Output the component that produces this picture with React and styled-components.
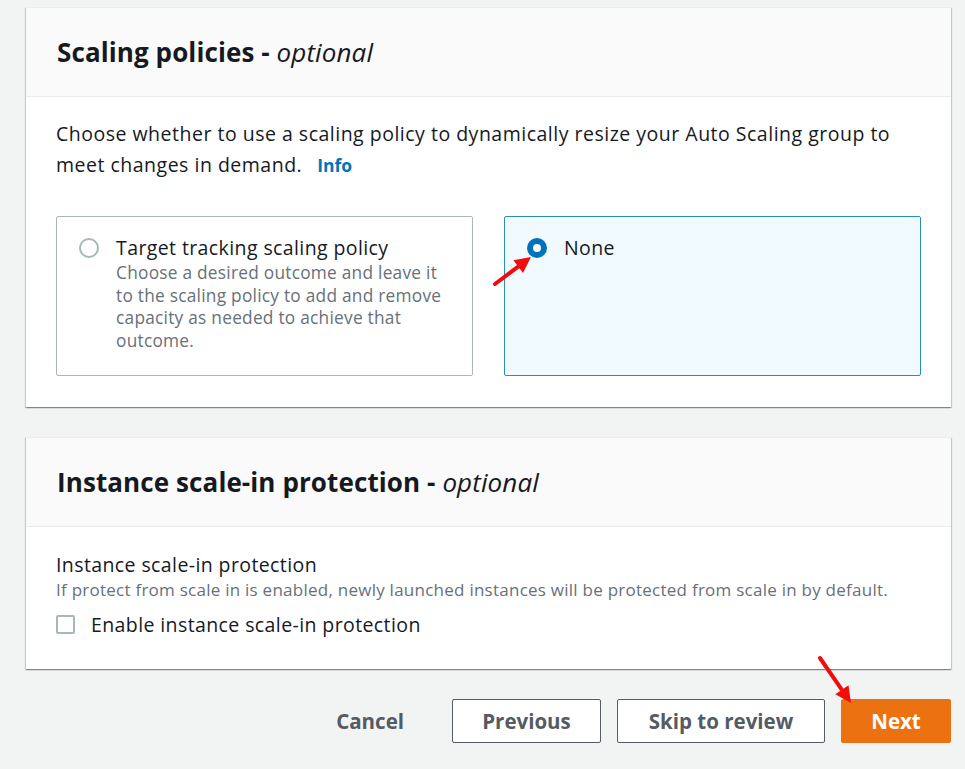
import React from 'react';
import styled, { createGlobalStyle } from 'styled-components';

const GlobalStyle = createGlobalStyle`
    html, body {
        margin: 0;
        padding: 0;
        background: #f2f3f3;
        font-family: "Open Sans", "Noto Sans", Arial, sans-serif;
        color: #16191f;
    }
`

const Page = styled.div`
    position: relative;
    width: 965px;
    height: 769px;
    padding: 7px 14px 0 26px;
    box-sizing: border-box;
    display: flex;
    flex-direction: column;
    gap: 30px;
`

const Card = styled.section`
    background: #fff;
    box-shadow: 0 1px 1px 0 rgba(0, 28, 36, 0.3), 1px 1px 1px 0 rgba(0, 28, 36, 0.15), -1px 1px 1px 0 rgba(0, 28, 36, 0.15);
    border-top: 1px solid #eaeded;
`

const CardHeader = styled.header`
    height: 88px;
    padding: 0 31px;
    display: flex;
    align-items: center;
    background: #fafafa;
    border-bottom: 1px solid #eaeded;
`

const Title = styled.h2`
    margin: 0;
    font-size: 26px;
    font-weight: 700;
    letter-spacing: 0.1px;

    & em {
        font-weight: 400;
    }
`

const CardBody = styled.div`
    padding: ${p => p.$pad};
`

const Lead = styled.p`
    margin: 0;
    font-size: 19.5px;
    line-height: 31px;
    letter-spacing: 0.5px;
`

const InfoLink = styled.a`
    display: inline-block;
    margin-left: 15px;
    font-size: 17.5px;
    line-height: 22px;
    font-weight: 700;
    letter-spacing: 0;
    color: #0073bb;
    text-decoration: none;
`

const Tiles = styled.div`
    margin-top: 36px;
    display: grid;
    grid-template-columns: 1fr 1fr;
    gap: 31px;
`

const Tile = styled.label`
    height: 160px;
    box-sizing: border-box;
    padding: 19px 28px 19px 22px;
    display: flex;
    align-items: flex-start;
    gap: 17px;
    border: 1px solid ${p => (p.$selected ? '#2a8fb7' : '#aab7b8')};
    border-radius: 2px;
    background: ${p => (p.$selected ? '#f1faff' : '#fff')};
`

const Radio = styled.span`
    flex: none;
    margin-top: 2px;
    width: 20px;
    height: 20px;
    box-sizing: border-box;
    border-radius: 50%;
    border: ${p => (p.$checked ? '6px solid #0073bb' : '2px solid #aab7b8')};
    background: #fff;
`

const TileText = styled.div`
    display: flex;
    flex-direction: column;
`

const TileTitle = styled.span`
    font-size: 19.5px;
    line-height: 24px;
    letter-spacing: 0.4px;
`

const TileDesc = styled.span`
    margin-top: 2px;
    font-size: 17.3px;
    line-height: 22.7px;
    color: #687078;
    letter-spacing: 0.25px;
`

const FieldLabel = styled.div`
    font-size: 19.5px;
    line-height: 25px;
    letter-spacing: 0.4px;
`

const FieldDesc = styled.div`
    margin-top: 1px;
    font-size: 17px;
    line-height: 24px;
    color: #687078;
    letter-spacing: 0.25px;
`

const CheckRow = styled.label`
    margin-top: 10px;
    display: flex;
    align-items: center;
    gap: 16px;
    font-size: 19.5px;
    line-height: 25px;
    letter-spacing: 0.4px;
`

const Checkbox = styled.span`
    flex: none;
    width: 19px;
    height: 19px;
    box-sizing: border-box;
    border: 2px solid #aab7b8;
    border-radius: 2px;
    background: #fff;
`

const Actions = styled.div`
    display: flex;
    justify-content: flex-end;
    align-items: center;
    gap: 16px;
`

const Button = styled.button`
    height: 44px;
    width: ${p => (p.$w ? `${p.$w}px` : 'auto')};
    padding: 0 ${p => (p.$variant === 'link' ? 31 : 0)}px;
    box-sizing: border-box;
    font-family: inherit;
    font-size: 20.5px;
    font-weight: 700;
    letter-spacing: 0;
    border-radius: 2px;
    cursor: pointer;
    color: ${p => (p.$variant === 'primary' ? '#fff' : '#545b64')};
    background: ${p => (p.$variant === 'primary' ? '#ec7211' : p.$variant === 'link' ? 'transparent' : '#fff')};
    border: 1px solid ${p => (p.$variant === 'primary' ? '#ec7211' : p.$variant === 'link' ? 'transparent' : '#545b64')};
`

const Annotation = styled.svg`
    position: absolute;
    left: 0;
    top: 0;
    pointer-events: none;
`

const Arrow = ({ x1, y1, x2, y2 }) => {
    const a = Math.atan2(y2 - y1, x2 - x1);
    const len = 16;
    const w = 8;
    const bx = x2 - len * Math.cos(a);
    const by = y2 - len * Math.sin(a);
    const px = -Math.sin(a) * w;
    const py = Math.cos(a) * w;
    return (
        <g>
            <line x1={x1} y1={y1} x2={bx} y2={by} stroke="#f20d0d" strokeWidth="4" strokeLinecap="round" />
            <polygon points={`${x2},${y2} ${bx + px},${by + py} ${bx - px},${by - py}`} fill="#f20d0d" />
        </g>
    );
};

const App = () => {
    return (
        <>
            <GlobalStyle />
            <Page>
                <Card>
                    <CardHeader>
                        <Title>Scaling policies - <em>optional</em></Title>
                    </CardHeader>
                    <CardBody $pad="21px 30px 31px 30px">
                        <Lead>
                            Choose whether to use a scaling policy to dynamically resize your Auto Scaling group to meet changes in demand.
                            <InfoLink href="#">Info</InfoLink>
                        </Lead>
                        <Tiles>
                            <Tile>
                                <Radio />
                                <TileText>
                                    <TileTitle>Target tracking scaling policy</TileTitle>
                                    <TileDesc>Choose a desired outcome and leave it to the scaling policy to add and remove capacity as needed to achieve that outcome.</TileDesc>
                                </TileText>
                            </Tile>
                            <Tile $selected>
                                <Radio $checked />
                                <TileText>
                                    <TileTitle>None</TileTitle>
                                </TileText>
                            </Tile>
                        </Tiles>
                    </CardBody>
                </Card>
                <Card>
                    <CardHeader>
                        <Title>Instance scale-in protection - <em>optional</em></Title>
                    </CardHeader>
                    <CardBody $pad="25px 30px 32px 30px">
                        <FieldLabel>Instance scale-in protection</FieldLabel>
                        <FieldDesc>If protect from scale in is enabled, newly launched instances will be protected from scale in by default.</FieldDesc>
                        <CheckRow>
                            <Checkbox />
                            Enable instance scale-in protection
                        </CheckRow>
                    </CardBody>
                </Card>
                <Actions>
                    <Button $variant="link">Cancel</Button>
                    <Button $w={149}>Previous</Button>
                    <Button $w={208}>Skip to review</Button>
                    <Button $variant="primary" $w={110}>Next</Button>
                </Actions>
                <Annotation width="965" height="769">
                    <Arrow x1={495} y1={284} x2={531} y2={257} />
                    <Arrow x1={820} y1={658} x2={851} y2={703} />
                </Annotation>
            </Page>
        </>
    );
};

export default App;
